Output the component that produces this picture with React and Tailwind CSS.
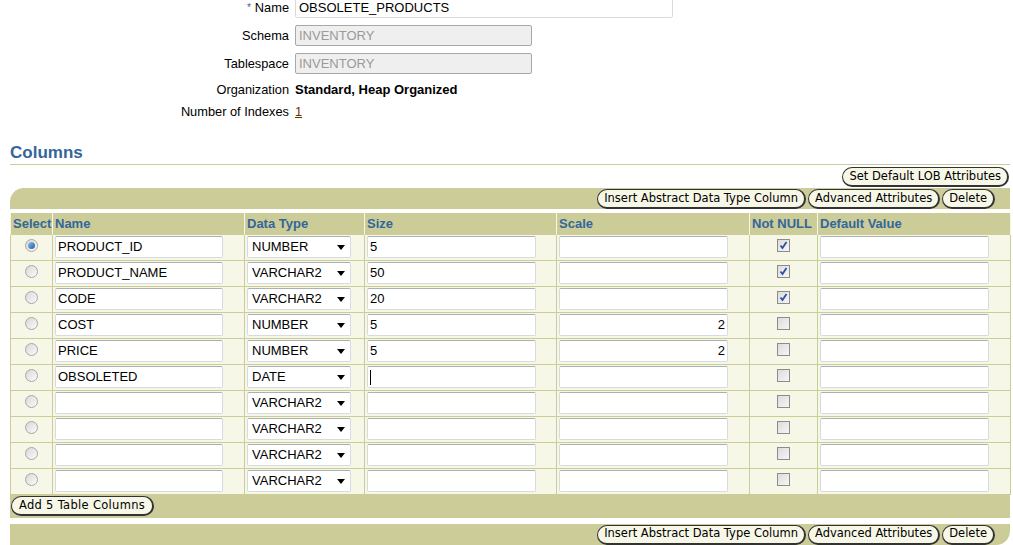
// Edit Table — Columns editor (BLAF look)

const ROWS = [
  { name: "PRODUCT_ID", type: "NUMBER", size: "5", scale: "", nn: true, sel: true },
  { name: "PRODUCT_NAME", type: "VARCHAR2", size: "50", scale: "", nn: true },
  { name: "CODE", type: "VARCHAR2", size: "20", scale: "", nn: true },
  { name: "COST", type: "NUMBER", size: "5", scale: "2", nn: false },
  { name: "PRICE", type: "NUMBER", size: "5", scale: "2", nn: false },
  { name: "OBSOLETED", type: "DATE", size: "", scale: "", nn: false, cursor: true },
  { name: "", type: "VARCHAR2", size: "", scale: "" },
  { name: "", type: "VARCHAR2", size: "", scale: "" },
  { name: "", type: "VARCHAR2", size: "", scale: "" },
  { name: "", type: "VARCHAR2", size: "", scale: "" },
];

function Btn({ children, wide = false }) {
  return (
    <button className={`h-5 ${wide ? "px-[7px] tracking-[0.3px]" : "px-[6px]"} rounded-full bg-[#f7f7e7] border border-[#333] border-r-2 border-b-2 text-[11.5px] font-['DejaVu_Sans',sans-serif] text-black leading-none whitespace-nowrap`}>
      {children}
    </button>
  );
}

function Field({ value = "", width, right = false, cursor = false }) {
  return (
    <div
      className={`h-[22px] ${width} bg-white border border-[#d6dbe3] border-t-[#aab0b8] rounded-[2px] flex items-center px-[2px] text-[13px] text-black ${right ? "justify-end" : ""}`}
    >
      {cursor && <span className="w-px h-[15px] bg-black" />}
      {value}
    </div>
  );
}

function Select({ value }) {
  return (
    <div className="h-[22px] w-[104px] bg-white border border-[#d6dbe3] border-t-[#aab0b8] rounded-[2px] flex items-center justify-between pl-[4px] pr-[5px] text-[13px] text-black">
      <span>{value}</span>
      <svg width="8" height="5" viewBox="0 0 8 5"><path d="M0 0h8L4 5z" fill="#000" /></svg>
    </div>
  );
}

function Radio({ on }) {
  return (
    <span className="w-[13px] h-[13px] rounded-full border border-[#a8a8a8] bg-gradient-to-br from-[#d8d8d8] to-[#fbfbfb] flex items-center justify-center">
      {on && <span className="w-[7px] h-[7px] rounded-full bg-gradient-to-br from-[#8fc2ef] to-[#1b5d9c]" />}
    </span>
  );
}

function Check({ on }) {
  return (
    <span className="w-[13px] h-[13px] border border-[#8c8c8c] bg-gradient-to-br from-[#dcdcdc] to-[#f6f6f6] flex items-center justify-center">
      {on && (
        <svg width="9" height="9" viewBox="0 0 9 9">
          <path d="M1.5 4.5l2 2.5L7.5 1" stroke="#2d4fa0" strokeWidth="1.8" fill="none" />
        </svg>
      )}
    </span>
  );
}

const CELL = "border border-[#cccc99] bg-[#f7f7e7] h-[26px] p-0";
const HEAD = "border-x border-[#f7f7e7] bg-[#cccc99] h-[21px] text-left text-[13px] font-bold text-[#336699] px-[2px] leading-none";

export default function App() {
  return (
    <div className="w-[1013px] h-[545px] overflow-hidden bg-white font-['Liberation_Sans',Arial,sans-serif] text-[12.8px] text-black">
      {/* Formulario superior */}
      <div className="grid grid-cols-[289px_1fr] gap-x-[6px] items-center">
        <div className="text-right h-[18px] leading-[16px]">
          <span className="text-[#336699] text-[10px] mr-[4px] align-top">*</span>Name
        </div>
        <div className="h-[18px]">
          <div className="-mt-[3px] h-[21px] w-[378px] border border-[#d6dbe3] rounded-[2px] px-[3px] text-[13px] flex items-center">OBSOLETE_PRODUCTS</div>
        </div>

        <div className="text-right mt-[7px]">Schema</div>
        <div className="mt-[7px] h-[21px] w-[237px] bg-[#efefef] border border-[#a8a8a8] rounded-[2px] px-[3px] text-[13px] text-[#9a9a9a] flex items-center">INVENTORY</div>

        <div className="text-right mt-[7px]">Tablespace</div>
        <div className="mt-[7px] h-[21px] w-[237px] bg-[#efefef] border border-[#a8a8a8] rounded-[2px] px-[3px] text-[13px] text-[#9a9a9a] flex items-center">INVENTORY</div>

        <div className="text-right mt-[8px] h-[16px] leading-[16px]">Organization</div>
        <div className="mt-[8px] h-[16px] leading-[16px] font-bold text-[13px]">Standard, Heap Organized</div>

        <div className="text-right mt-[6px] h-[16px] leading-[16px]">Number of Indexes</div>
        <div className="mt-[6px] h-[16px] leading-[16px]">
          <span className="underline text-[#663300]">1</span>
        </div>
      </div>

      {/* Columns */}
      <div className="ml-[10px] w-[1000px] mt-[23px]">
        <h2 className="text-[17px] font-bold text-[#336699] leading-[20px] border-b border-[#cccc99] pb-[1px]">Columns</h2>

        <div className="flex justify-end mt-[2px] pr-[1px]">
          <Btn>Set Default LOB Attributes</Btn>
        </div>

        <div className="mt-[1px] h-[21px] bg-[#cccc99] rounded-tl-[14px] flex items-start justify-end gap-[2px] pr-[15px] pt-[1px]">
          <Btn>Insert Abstract Data Type Column</Btn>
          <Btn>Advanced Attributes</Btn>
          <Btn>Delete</Btn>
        </div>

        <table className="mt-[4px] w-[1000px] border-collapse table-fixed">
          <colgroup>
            <col className="w-[42px]" />
            <col className="w-[192px]" />
            <col className="w-[120px]" />
            <col className="w-[192px]" />
            <col className="w-[193px]" />
            <col className="w-[68px]" />
            <col className="w-[193px]" />
          </colgroup>
          <thead>
            <tr>
              <th className={HEAD}>Select</th>
              <th className={HEAD}>Name</th>
              <th className={HEAD}>Data Type</th>
              <th className={HEAD}>Size</th>
              <th className={HEAD}>Scale</th>
              <th className={HEAD}>Not NULL</th>
              <th className={HEAD}>Default Value</th>
            </tr>
          </thead>
          <tbody>
            {ROWS.map((r, i) => (
              <tr key={i}>
                <td className={CELL}>
                  <div className="flex justify-center -mt-[4px]"><Radio on={r.sel} /></div>
                </td>
                <td className={CELL}><div className="pl-[2px]"><Field value={r.name} width="w-[168px]" /></div></td>
                <td className={CELL}><div className="pl-[2px]"><Select value={r.type} /></div></td>
                <td className={CELL}><div className="pl-[2px]"><Field value={r.size} width="w-[169px]" cursor={r.cursor} /></div></td>
                <td className={CELL}><div className="pl-[2px]"><Field value={r.scale} width="w-[169px]" right /></div></td>
                <td className={CELL}>
                  <div className="flex justify-center -mt-[4px]"><Check on={r.nn} /></div>
                </td>
                <td className={CELL}><div className="pl-[2px]"><Field width="w-[169px]" /></div></td>
              </tr>
            ))}
          </tbody>
        </table>

        <div className="h-[23px] bg-[#cccc99] flex items-center pl-[1px]">
          <Btn wide>Add 5 Table Columns</Btn>
        </div>

        <div className="mt-[6px] h-[21px] bg-[#cccc99] rounded-br-[14px] flex items-start justify-end gap-[2px] pr-[15px] pt-[1px]">
          <Btn>Insert Abstract Data Type Column</Btn>
          <Btn>Advanced Attributes</Btn>
          <Btn>Delete</Btn>
        </div>
      </div>
    </div>
  );
}
